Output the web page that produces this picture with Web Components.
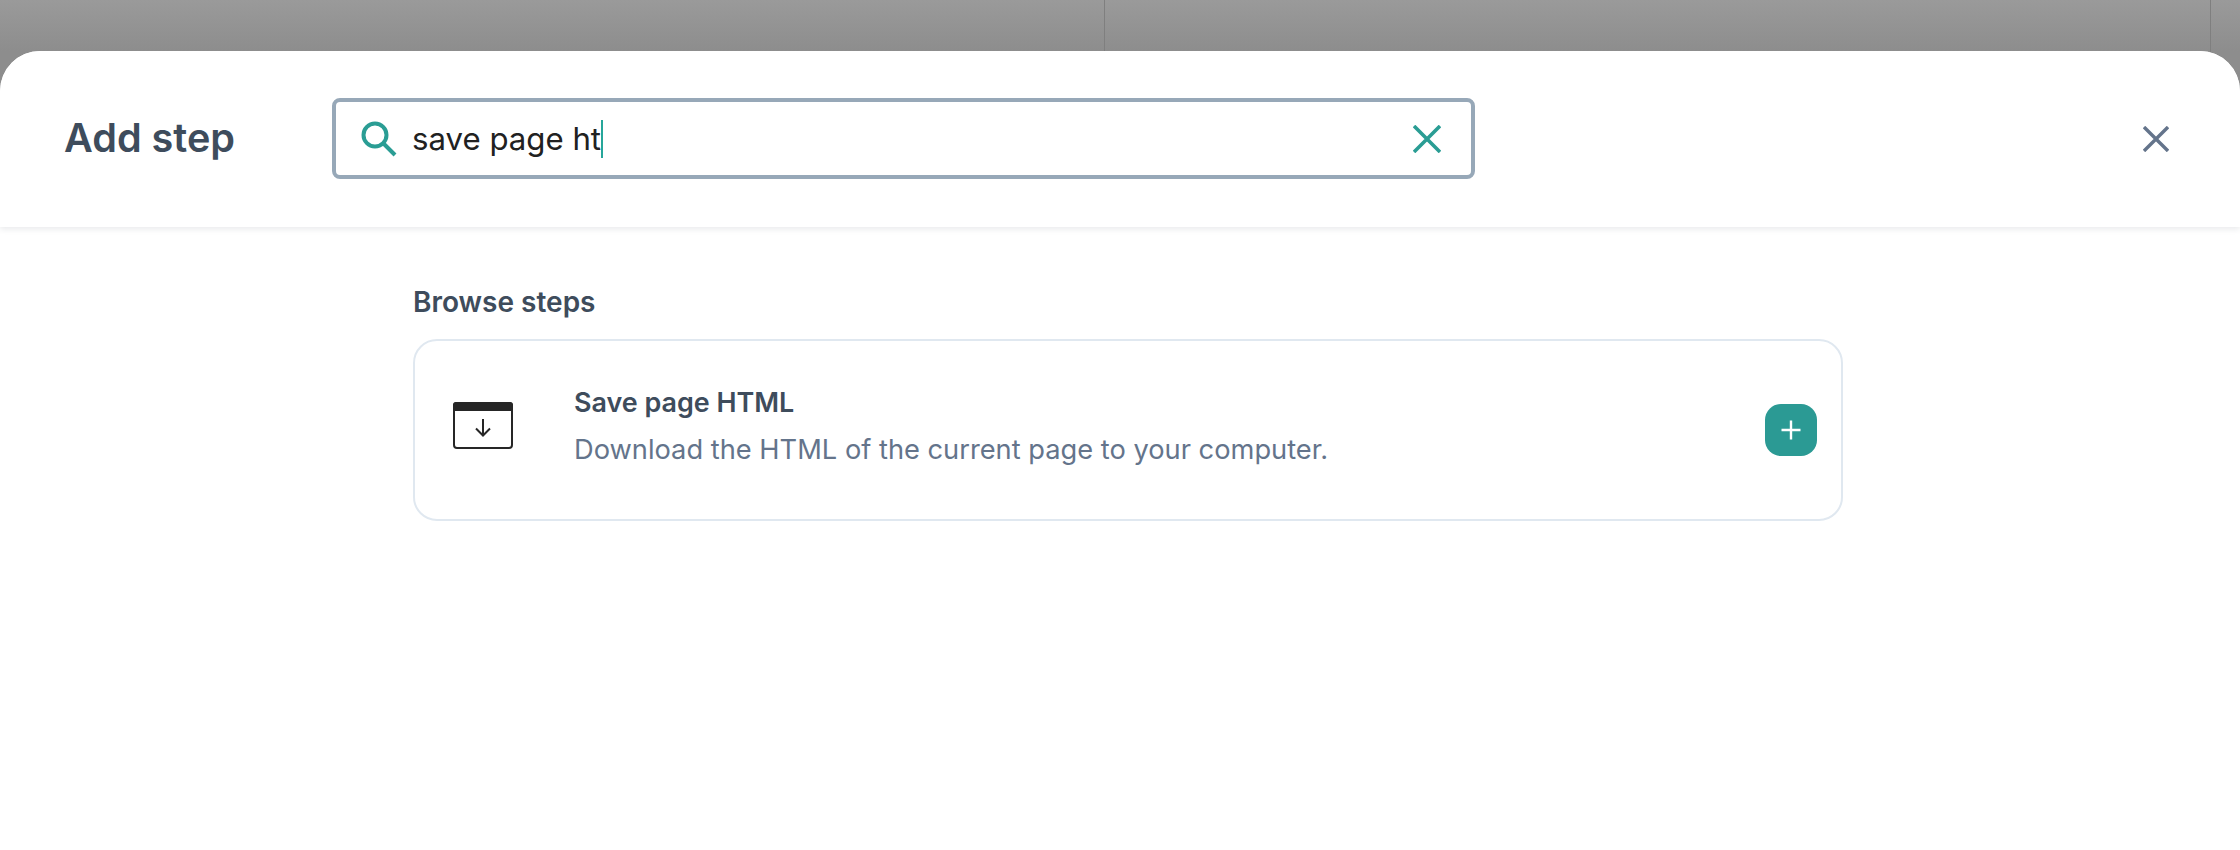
<!DOCTYPE html>
<html lang="en">
<head>
<meta charset="utf-8">
<title>Add step</title>
<style>
  html, body { margin: 0; height: 100%; background: #fff; overflow: hidden; }
  body { font-family: Inter, "Noto Sans", sans-serif; }
</style>
</head>
<body>
<step-backdrop></step-backdrop>
<step-dialog>
  <step-header slot="header" heading="Add step">
    <search-box value="save page ht"></search-box>
  </step-header>
  <browse-section heading="Browse steps">
    <step-card heading="Save page HTML" text="Download the HTML of the current page to your computer."></step-card>
  </browse-section>
</step-dialog>

<script>
class StepBackdrop extends HTMLElement {
  constructor() {
    super();
    this.attachShadow({ mode: "open" });
    this.shadowRoot.innerHTML = `
      <style>
        :host {
          display: grid;
          grid-template-columns: 1105px 1106px 1fr;
          height: 91px;
          margin-bottom: -40px;
          background: linear-gradient(#9a9a9a 0, #8d8d8d 51px);
        }
        div { border-right: 1px solid #7f7f7f; }
        div:last-child { border: none; }
      </style>
      <div></div><div></div><div></div>
    `;
  }
}

class StepDialog extends HTMLElement {
  constructor() {
    super();
    this.attachShadow({ mode: "open" });
    this.shadowRoot.innerHTML = `
      <style>
        :host {
          display: block;
          position: relative;
          height: 799px;
          background: #fff;
          border-radius: 40px 40px 0 0;
          overflow: hidden;
        }
      </style>
      <slot name="header"></slot>
      <slot></slot>
    `;
  }
}

class StepHeader extends HTMLElement {
  constructor() {
    super();
    this.attachShadow({ mode: "open" });
    this.shadowRoot.innerHTML = `
      <style>
        :host {
          display: flex;
          align-items: center;
          box-sizing: border-box;
          height: 176px;
          padding: 0 71px 1px 64px;
          background: #fff;
          box-shadow: 0 2px 6px rgba(30, 41, 59, 0.1);
          position: relative;
        }
        h1 {
          width: 268px;
          margin: 0;
          font: 600 39.6px/1 Inter, sans-serif;
          color: #3e4c5c;
        }
        svg { display: block; margin-left: auto; }
      </style>
      <h1>${this.getAttribute("heading")}</h1>
      <slot></slot>
      <svg width="26" height="26" viewBox="0 0 26 26" fill="none" stroke="#64748b" stroke-width="3.4">
        <path d="M1 1 L25 25 M25 1 L1 25"/>
      </svg>
    `;
  }
}

class SearchBox extends HTMLElement {
  constructor() {
    super();
    this.attachShadow({ mode: "open" });
    this.shadowRoot.innerHTML = `
      <style>
        :host {
          display: flex;
          align-items: center;
          box-sizing: border-box;
          width: 1143px;
          height: 81px;
          padding: 0 30px 0 25px;
          border: 4px solid #97a8b8;
          border-radius: 8px;
          background: #fff;
        }
        .value {
          margin-left: 15px;
          font: 400 31.2px/48px Inter, sans-serif;
          color: #212121;
          white-space: nowrap;
        }
        .caret {
          width: 2px;
          height: 38px;
          background: #26a69a;
        }
        svg { display: block; flex: none; }
        .clear { margin-left: auto; }
      </style>
      <svg width="36" height="36" viewBox="0 0 36 36" fill="none" stroke="#2a9d94" stroke-width="4">
        <circle cx="14" cy="14" r="11.5"/>
        <path d="M22 22 L34 34"/>
      </svg>
      <span class="value">${this.getAttribute("value")}</span>
      <span class="caret"></span>
      <svg class="clear" width="28" height="28" viewBox="0 0 28 28" fill="none" stroke="#2a9d94" stroke-width="3.6">
        <path d="M1 1 L27 27 M27 1 L1 27"/>
      </svg>
    `;
  }
}

class BrowseSection extends HTMLElement {
  constructor() {
    super();
    this.attachShadow({ mode: "open" });
    this.shadowRoot.innerHTML = `
      <style>
        :host {
          display: block;
          width: 1430px;
          margin-left: 413px;
          padding-top: 58px;
        }
        h2 {
          margin: 0 0 20px;
          font: 600 28px/34px Inter, sans-serif;
          color: #3e4c5c;
        }
      </style>
      <h2>${this.getAttribute("heading")}</h2>
      <slot></slot>
    `;
  }
}

class StepCard extends HTMLElement {
  constructor() {
    super();
    this.attachShadow({ mode: "open" });
    this.shadowRoot.innerHTML = `
      <style>
        :host {
          display: flex;
          align-items: center;
          box-sizing: border-box;
          height: 182px;
          padding: 0 24px 0 38px;
          border: 2px solid #e0e8f0;
          border-radius: 24px;
          background: #fff;
        }
        .icon { display: block; flex: none; margin: 0 61px 10px 0; }
        .copy { flex: 1; padding-bottom: 9px; }
        h3 {
          margin: 0 0 12px;
          font: 600 26.9px/36px Inter, sans-serif;
          color: #3e4c5c;
        }
        p {
          margin: 0;
          font: 400 27.25px/36px Inter, sans-serif;
          color: #64748b;
        }
        button {
          display: flex;
          align-items: center;
          justify-content: center;
          width: 52px;
          height: 52px;
          padding: 0;
          border: none;
          border-radius: 16px;
          background: #2b9a94;
        }
        button svg { display: block; }
      </style>
      <svg class="icon" width="60" height="47" viewBox="0 0 60 47" fill="none">
        <rect x="1" y="1" width="58" height="45" rx="3" stroke="#262626" stroke-width="2"/>
        <path d="M3 0 H57 A3 3 0 0 1 60 3 V9 H0 V3 A3 3 0 0 1 3 0 Z" fill="#262626"/>
        <path d="M30 17 V33 M23 26.5 L30 33.5 L37 26.5" stroke="#262626" stroke-width="2"/>
      </svg>
      <div class="copy">
        <h3>${this.getAttribute("heading")}</h3>
        <p>${this.getAttribute("text")}</p>
      </div>
      <button aria-label="Add">
        <svg width="20" height="20" viewBox="0 0 20 20" stroke="#fff" stroke-width="2.4">
          <path d="M0.5 10 H19.5 M10 0.5 V19.5"/>
        </svg>
      </button>
    `;
  }
}

customElements.define("step-backdrop", StepBackdrop);
customElements.define("step-dialog", StepDialog);
customElements.define("step-header", StepHeader);
customElements.define("search-box", SearchBox);
customElements.define("browse-section", BrowseSection);
customElements.define("step-card", StepCard);
</script>
</body>
</html>
